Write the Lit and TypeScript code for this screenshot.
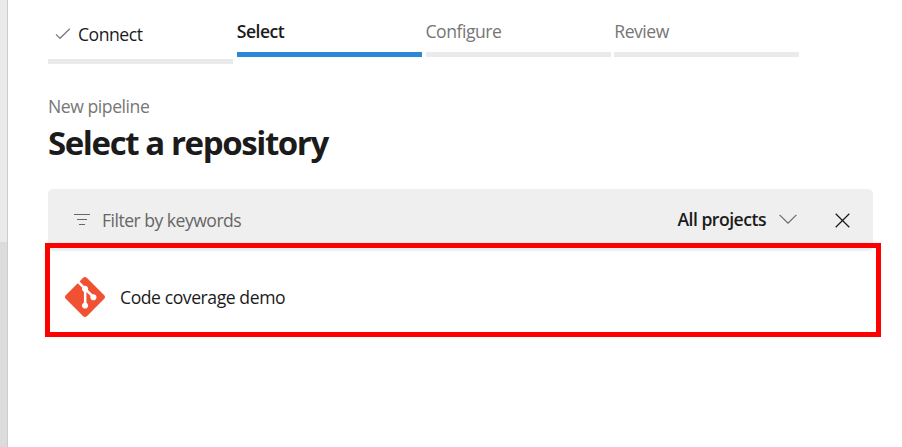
import { LitElement, html, css } from "lit";
import { customElement } from "lit/decorators.js";
import { classMap } from "lit/directives/class-map.js";

type StepState = "done" | "current" | "upcoming";

interface Step {
  label: string;
  state: StepState;
}

const steps: Step[] = [
  { label: "Connect", state: "done" },
  { label: "Select", state: "current" },
  { label: "Configure", state: "upcoming" },
  { label: "Review", state: "upcoming" },
];

@customElement("wizard-steps")
class WizardSteps extends LitElement {
  static styles = css`
    :host { display: grid; grid-template-columns: repeat(4, 185px); column-gap: 3.75px; align-items: start; height: 45px; }
    .step { display: flex; flex-direction: column; color: #767676; }
    .label { display: flex; align-items: center; height: 24px; line-height: 24px; letter-spacing: -0.47px; }
    .bar { height: 5px; margin-top: 9px; background: #eaeaea; }
    .done { padding-top: 3px; color: #1b1b1b; }
    .done .label { padding-left: 7px; gap: 7px; }
    .done .bar { margin-top: 13px; }
    .current { color: #1b1b1b; }
    .current .label { font-weight: 600; letter-spacing: -0.5px; }
    .current .bar { background: #2b88d8; }
  `;

  render() {
    return steps.map(
      (s) => html`
        <div class=${classMap({ step: true, [s.state]: true })}>
          <div class="label">
            ${s.state === "done"
              ? html`<svg width="16" height="12" viewBox="0 0 16 12" fill="none" stroke="#777" stroke-width="1.2">
                  <path d="M1 6.3 5 10.3 14.8 .7" />
                </svg>`
              : null}
            <span>${s.label}</span>
          </div>
          <div class="bar"></div>
        </div>
      `,
    );
  }
}

@customElement("filter-bar")
class FilterBar extends LitElement {
  static styles = css`
    :host { display: flex; align-items: flex-start; width: 825px; height: 62px; box-sizing: border-box; padding: 19px 23.5px 0 26px; border-radius: 5px; background: #efefef; }
    svg { display: block; fill: none; }
    .lines { margin-top: 5px; }
    .placeholder { flex: 1; margin-left: 12px; line-height: 24px; color: #666; letter-spacing: -0.52px; }
    .projects { line-height: 24px; margin-top: -1px; font-weight: 600; color: #1b1b1b; letter-spacing: -0.5px; }
    .chevron { margin: 6px 37.5px 0 13px; }
    .close { margin-top: 4.5px; }
  `;

  render() {
    return html`
      <svg class="lines" width="16" height="13" viewBox="0 0 16 13" stroke="#666">
        <path d="M0 1.5H16M3 6.5H13M5 11.5H11" />
      </svg>
      <span class="placeholder">Filter by keywords</span>
      <span class="projects">All projects</span>
      <svg class="chevron" width="18" height="11" viewBox="0 0 18 11" stroke="#666" stroke-width="1.1">
        <path d="M.6 .8 9 9.2 17.4 .8" />
      </svg>
      <svg class="close" width="15" height="15" viewBox="0 0 15 15" stroke="#1b1b1b" stroke-width="1.25">
        <path d="M.7 .7 14.3 14.3M14.3 .7 .7 14.3" />
      </svg>
    `;
  }
}

@customElement("repo-row")
class RepoRow extends LitElement {
  static styles = css`
    :host { display: flex; align-items: center; height: 84px; width: 825px; box-sizing: border-box; padding-left: 17px; color: #1b1b1b; }
    svg { display: block; fill: #f05133; margin-top: 8px; }
    .name { margin: 8px 0 0 15px; line-height: 24px; letter-spacing: -0.44px; }
  `;

  render() {
    return html`
      <svg width="40" height="40" viewBox="0 0 24 24">
        <path d="M23.546 10.93L13.067.452c-.604-.603-1.582-.603-2.188 0L8.708 2.627l2.76 2.76c.645-.215 1.379-.07 1.889.441.516.515.658 1.258.438 1.9l2.658 2.66c.645-.223 1.387-.078 1.9.435.721.72.721 1.884 0 2.604-.719.719-1.881.719-2.6 0-.539-.541-.674-1.337-.404-1.996L12.86 8.955v6.525c.176.086.342.203.488.348.713.721.713 1.883 0 2.6-.719.721-1.889.721-2.609 0-.719-.719-.719-1.879 0-2.598.182-.18.387-.316.605-.406V8.835c-.217-.091-.424-.222-.6-.401-.545-.545-.676-1.342-.396-2.009L7.636 3.7.45 10.881c-.6.605-.6 1.584 0 2.189l10.48 10.477c.604.604 1.582.604 2.186 0l10.43-10.43c.605-.603.605-1.582 0-2.187" />
      </svg>
      <span class="name">Code coverage demo</span>
    `;
  }
}

@customElement("app-root")
class AppRoot extends LitElement {
  static styles = css`
    :host { display: flex; height: 100vh; overflow: hidden; background: #fff; font: 17.6px/24px "Open Sans", "Noto Sans", sans-serif; }
    .rail { flex: none; width: 7px; border-right: 1px solid #ccc; background: linear-gradient(#eaeaea 242px, #dcdcdc 242px); }
    .page { flex: 1; padding: 19px 0 0 40px; }
    .crumb { margin-top: 30px; color: #767676; letter-spacing: -0.45px; }
    .title { margin: 5px 0 0; height: 66px; font-size: 33px; line-height: 40px; font-weight: 700; letter-spacing: -1.4px; color: #1b1b1b; }
    .results { position: relative; width: 825px; }
    .highlight { position: absolute; left: -3px; top: 54px; width: 836px; height: 94px; box-sizing: border-box; border: 5px solid #f00; }
  `;

  render() {
    return html`
      <div class="rail"></div>
      <main class="page">
        <wizard-steps></wizard-steps>
        <div class="crumb">New pipeline</div>
        <h1 class="title">Select a repository</h1>
        <div class="results">
          <filter-bar></filter-bar>
          <repo-row></repo-row>
          <div class="highlight"></div>
        </div>
      </main>
    `;
  }
}
